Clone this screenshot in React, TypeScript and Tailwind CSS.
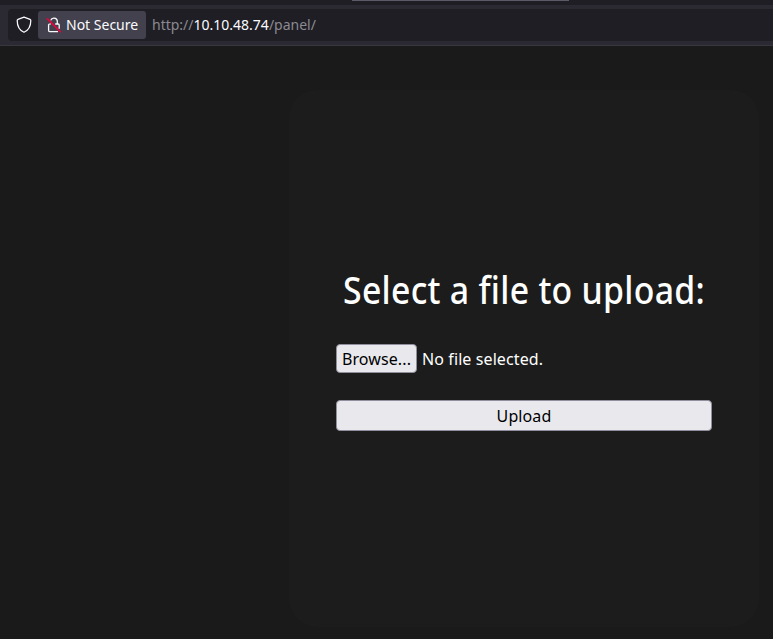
function ShieldIcon() {
  return (
    <svg width="16" height="18" viewBox="0 0 16 18" fill="none" className="shrink-0">
      <path
        d="M8 1.2 L14 3.3 Q14.8 3.6 14.8 4.5 C14.8 10.8 12.8 14.2 8 16.3 C3.2 14.2 1.2 10.8 1.2 4.5 Q1.2 3.6 2 3.3 Z"
        stroke="#fbfbfe"
        strokeWidth="1.25"
        strokeLinejoin="round"
      />
    </svg>
  );
}

function InsecureLockIcon() {
  return (
    <svg width="16" height="18" viewBox="0 0 16 18" fill="none" className="shrink-0">
      <path
        d="M4.7 4.4 A3.4 3.4 0 0 1 11.3 5 V8 M9.2 8 H12.2 a1 1 0 0 1 1 1 V12.8 M2.6 8.6 V14.6 a1 1 0 0 0 1 1 H12"
        stroke="#fbfbfe"
        strokeWidth="1.3"
      />
      <path d="M2.6 8.8 Q2.8 8 3.6 8 H5" stroke="#fbfbfe" strokeWidth="1.2" />
      <path d="M1 2.4 L14.8 16.2" stroke="#f0003c" strokeWidth="1.6" />
    </svg>
  );
}

function BrowserBar() {
  return (
    <header className="shrink-0">
      <div className="flex h-[5px] items-start bg-[#1f1e25] pl-[352px]">
        <div className="h-px w-[217px] bg-[#5b5a66]" />
      </div>
      <div className="h-[41px] border-b border-[#38373f] bg-[#2b2a33] pt-1 pl-2">
        <div className="flex h-8 items-center rounded-l bg-[#1f1e25] pl-2">
          <ShieldIcon />
          <div className="ml-1.5 flex h-7 w-[108px] items-center rounded-[3px] bg-[#42414d] pl-2">
            <InsecureLockIcon />
            <span className="ml-1 text-sm whitespace-nowrap text-[#fbfbfe]">Not Secure</span>
          </div>
          <span className="ml-1.5 text-sm whitespace-nowrap text-[#8b8a90]">
            http://<span className="text-[#fbfbfe]">10.10.48.74</span>/panel/
          </span>
        </div>
      </div>
    </header>
  );
}

export default function App() {
  return (
    <div className="flex h-[639px] w-[773px] flex-col overflow-hidden bg-[#1a1a1a] font-['Noto_Sans',sans-serif]">
      <BrowserBar />
      <main className="pt-11 pl-[289px]">
        <section className="h-[537px] w-[470px] rounded-[28px] bg-[#1c1c1c] px-[47px] pt-[170px]">
          <h1 className="flex h-[58px] scale-x-[0.89] items-center justify-center text-[38px] font-medium tracking-[0.3px] whitespace-nowrap text-white">
            Select a file to upload:
          </h1>
          <div className="mt-[26px] flex h-[29px] items-center">
            <button className="h-[29px] w-[81px] rounded border border-[#8f8f9d] bg-[#e9e9ed] text-base leading-none tracking-[0.1px] whitespace-nowrap text-black">
              Browse...
            </button>
            <span className="ml-[5px] text-base tracking-[0.1px] whitespace-nowrap text-white">No file selected.</span>
          </div>
          <button className="mt-[27px] h-[31px] w-[376px] rounded border border-[#8f8f9d] bg-[#e9e9ed] text-base leading-none tracking-[0.1px] text-black">
            Upload
          </button>
        </section>
      </main>
    </div>
  );
}
